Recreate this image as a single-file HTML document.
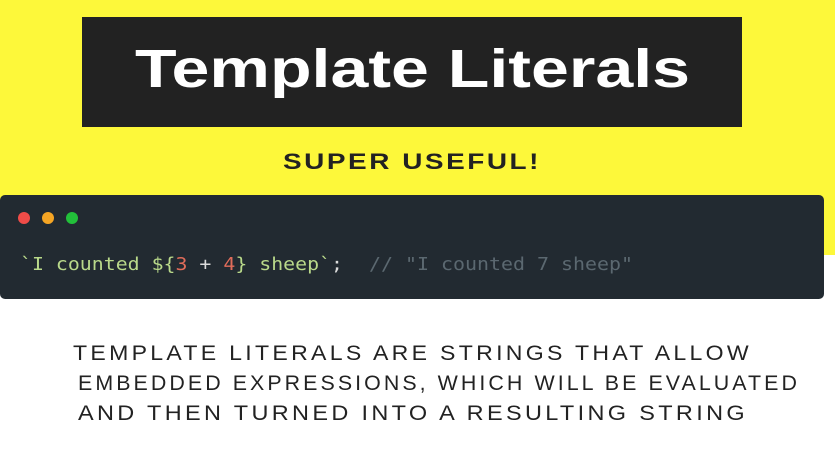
<!DOCTYPE html>
<html><head><meta charset="utf-8"><style>
html,body{margin:0;padding:0;width:835px;height:454px;overflow:hidden;background:#fff}
</style></head><body>
<svg width="835" height="454" viewBox="0 0 835 454" xmlns="http://www.w3.org/2000/svg">
<rect x="0" y="0" width="835" height="255" fill="#fdf83a"/>
<rect x="82" y="17" width="660" height="110" fill="#222222"/>
<text x="135" y="87" textLength="555" lengthAdjust="spacingAndGlyphs" font-family="Liberation Sans, sans-serif" font-weight="bold" font-size="54" fill="#fff">Template Literals</text>
<text x="283" y="169" textLength="258" lengthAdjust="spacingAndGlyphs" letter-spacing="2" font-family="Liberation Sans, sans-serif" font-weight="bold" font-size="22" fill="#222">SUPER USEFUL!</text>
<rect x="0" y="195" width="824" height="104" rx="5" fill="#222a31"/>
<circle cx="24" cy="218" r="6" fill="#f04c48"/>
<circle cx="48" cy="218" r="6" fill="#f5a524"/>
<circle cx="72" cy="218" r="6" fill="#22c03a"/>
<text x="20" y="270" textLength="323" lengthAdjust="spacingAndGlyphs" font-family="DejaVu Sans Mono, monospace" font-size="18" fill="#b9d98a">`I counted ${<tspan fill="#e06c5a">3</tspan><tspan fill="#dcdcdc"> + </tspan><tspan fill="#e06c5a">4</tspan>} sheep`<tspan fill="#dcdcdc">;</tspan></text>
<text x="369" y="270" textLength="264" lengthAdjust="spacingAndGlyphs" font-family="DejaVu Sans Mono, monospace" font-size="18" fill="#5b6870">// "I counted 7 sheep"</text>
<g font-family="Liberation Sans, sans-serif" font-size="21" fill="#222" letter-spacing="3">
<text x="73" y="360" textLength="679" lengthAdjust="spacingAndGlyphs">TEMPLATE LITERALS ARE STRINGS THAT ALLOW</text>
<text x="78" y="390" textLength="722" lengthAdjust="spacingAndGlyphs">EMBEDDED EXPRESSIONS, WHICH WILL BE EVALUATED</text>
<text x="78" y="420" textLength="670" lengthAdjust="spacingAndGlyphs">AND THEN TURNED INTO A RESULTING STRING</text>
</g>
</svg>
</body></html>
